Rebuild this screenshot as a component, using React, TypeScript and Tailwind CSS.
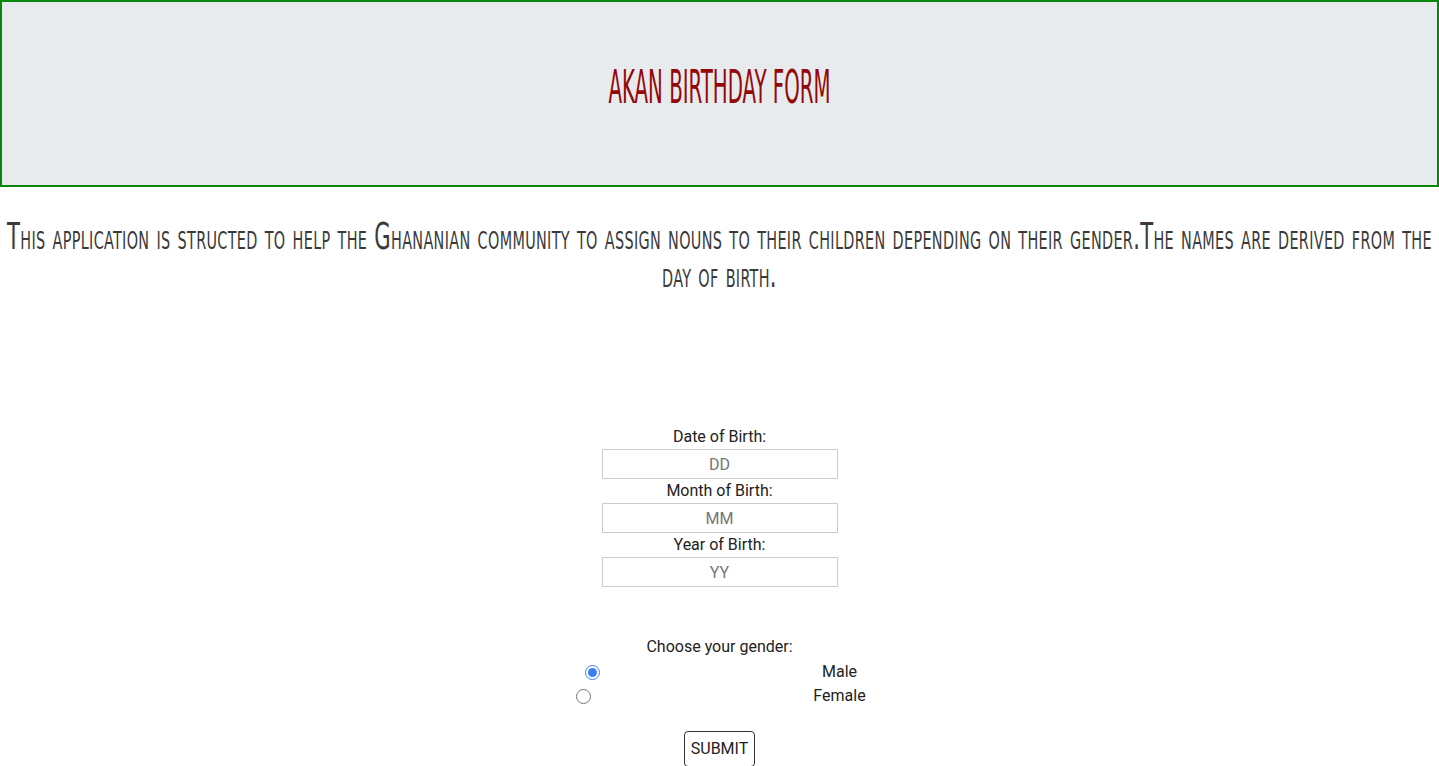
import { useState } from "react";

export default function App() {
  const [gender, setGender] = useState("male");

  return (
    <div className="min-h-screen bg-white font-['Roboto',sans-serif] text-[16px] text-[#222]">
      <header className="flex h-[187px] items-center justify-center border-2 border-[#0a870a] bg-[#e7ebee] pb-[11px]">
        <h1 className="inline-block origin-center scale-y-[2.1] font-['Liberation_Sans_Narrow','DejaVu_Sans_Condensed',sans-serif] text-[22px] leading-none text-[#940808]">
          AKAN BIRTHDAY FORM
        </h1>
      </header>

      <p className="mt-[30px] origin-top scale-y-[1.6] text-center font-['Liberation_Sans_Narrow','DejaVu_Sans_Condensed',sans-serif] text-[23.5px] leading-[24px] tracking-[0.33px] text-[#3a3a3a] [font-variant:small-caps]">
        <span className="block whitespace-nowrap">
          This application is structed to help the Ghananian community to assign nouns to their children depending on their gender.The names are derived from the
        </span>
        <span className="block whitespace-nowrap">day of birth.</span>
      </p>

      <form className="mt-[160px] flex flex-col items-center" onSubmit={(e) => e.preventDefault()}>
        <label className="leading-6">Date of Birth:</label>
        <input
          placeholder="DD"
          className="h-[30px] w-[236px] border border-[#cccccc] text-center text-[16px] outline-none placeholder:text-[#767676]"
        />
        <label className="leading-6">Month of Birth:</label>
        <input
          placeholder="MM"
          className="h-[30px] w-[236px] border border-[#cccccc] text-center text-[16px] outline-none placeholder:text-[#767676]"
        />
        <label className="leading-6">Year of Birth:</label>
        <input
          placeholder="YY"
          className="h-[30px] w-[236px] border border-[#cccccc] text-center text-[16px] outline-none placeholder:text-[#767676]"
        />

        <p className="mt-[48px] leading-6">Choose your gender:</p>
        <label className="flex h-6 items-center pl-[3px] pt-[2px]">
          <span className="flex w-[237px] items-center">
            <input
              type="radio"
              name="gender"
              checked={gender === "male"}
              onChange={() => setGender("male")}
              className="m-0 h-[15px] w-[15px] accent-[#3b7ff5]"
            />
          </span>
          <span>Male</span>
        </label>
        <label className="flex h-6 items-center pl-[3px] pt-[2px]">
          <span className="flex w-[237px] items-center">
            <input
              type="radio"
              name="gender"
              checked={gender === "female"}
              onChange={() => setGender("female")}
              className="m-0 h-[15px] w-[15px] accent-[#3b7ff5]"
            />
          </span>
          <span>Female</span>
        </label>

        <button
          type="submit"
          className="mt-[24px] h-[36px] rounded-[4px] border border-[#333] bg-white px-[6px] text-[16px] leading-none text-[#222]"
        >
          SUBMIT
        </button>
      </form>
    </div>
  );
}
